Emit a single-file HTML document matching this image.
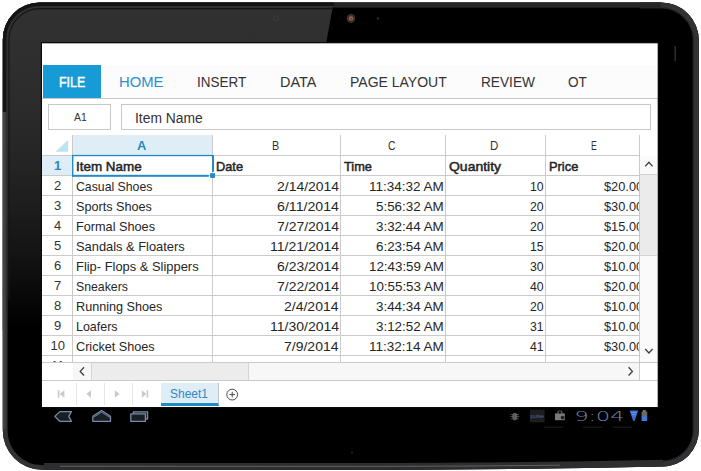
<!DOCTYPE html>
<html lang="en">
<head>
<meta charset="utf-8">
<title>Spreadsheet on tablet</title>
<style>
html,body{margin:0;padding:0;background:#fff;}
body{width:701px;height:471px;position:relative;overflow:hidden;font-family:"Liberation Sans",Arial,sans-serif;}
#dev{position:absolute;left:0;top:0;width:701px;height:471px;}
#scr{position:absolute;left:42px;top:43px;width:616px;height:364px;background:#fff;overflow:hidden;}
#app{position:absolute;left:-42px;top:-43px;width:701px;height:471px;}
.t{position:absolute;white-space:nowrap;line-height:20px;height:20px;transform-origin:0 0;}
#file{position:absolute;left:43px;top:65px;width:57.6px;height:33px;background:#179bd6;}
#rline{position:absolute;left:42px;top:98px;width:616px;height:1px;background:#c8c8c8;}
.box{position:absolute;border:1px solid #c8c8c8;background:#fff;box-sizing:border-box;}
#grid{position:absolute;left:42px;top:135px;width:598px;height:227px;overflow:hidden;}
#gin{position:absolute;left:-42px;top:-135px;width:701px;height:471px;}
.v{position:absolute;top:135px;width:1px;height:240px;background:#cbcbcb;}
.h{position:absolute;left:42px;width:598px;height:1px;background:#cbcbcb;}
#hA{position:absolute;left:73px;top:135px;width:140px;height:20px;background:#dfeef6;}
#h1{position:absolute;left:42px;top:156px;width:30px;height:19px;background:#dfeef6;}
</style>
</head>
<body>
<svg id="dev" viewBox="0 0 701 471" width="701" height="471">
<defs>
<linearGradient id="gl" gradientUnits="userSpaceOnUse" x1="0" y1="0" x2="0" y2="330">
<stop offset="0" stop-color="#313131"/><stop offset="0.15" stop-color="#2f2f2f"/><stop offset="0.33" stop-color="#2b2b2b"/><stop offset="0.48" stop-color="#252525"/><stop offset="0.64" stop-color="#1c1c1c"/><stop offset="0.79" stop-color="#121212"/><stop offset="0.91" stop-color="#070707"/><stop offset="1" stop-color="#000"/>
</linearGradient>
<clipPath id="body"><path d="M39.8,2.4 H661 A37.8,37.8 0 0 1 698.8,40.2 V430 A36.5,36.5 0 0 1 663,466.6 Q520,469.6 380,469.9 L42,469.8 A39.2,39.2 0 0 1 2.8,430.6 V39.4 A37,37 0 0 1 39.8,2.4 Z"/></clipPath>
</defs>
<path d="M39.8,2.4 H661 A37.8,37.8 0 0 1 698.8,40.2 V430 A36.5,36.5 0 0 1 663,466.6 Q520,469.6 380,469.9 L42,469.8 A39.2,39.2 0 0 1 2.8,430.6 V39.4 A37,37 0 0 1 39.8,2.4 Z" fill="#000"/>
<g clip-path="url(#body)">
<polygon points="0,0 334,0 326,44 43,44 43,330 0,330" fill="url(#gl)"/>
<path d="M640,2.4 H661 A37.8,37.8 0 0 1 698.8,40.2 V430 A36.5,36.5 0 0 1 663,466.6" fill="none" stroke="#262627" stroke-width="12"/>
<path d="M39.8,2.4 H661 A37.8,37.8 0 0 1 698.8,40.2 V430 A36.5,36.5 0 0 1 663,466.6 Q520,469.6 380,469.9 L42,469.8 A39.2,39.2 0 0 1 2.8,430.6 V39.4 A37,37 0 0 1 39.8,2.4 Z" fill="none" stroke="#323234" stroke-width="9.5"/>
<path d="M44,466.4 L380,466.5 Q520,466.2 663,463.2" fill="none" stroke="#2e2e30" stroke-width="7"/>
<path d="M60,466.3 L380,466.4 Q470,466.3 560,465.2" fill="none" stroke="#777" stroke-width="0.7"/>
<path d="M2.8,112 V39.4 A37,37 0 0 1 39.8,2.4 H334" fill="none" stroke="#141415" stroke-width="7"/>
<path d="M9,300 V39.4 A30.8,30.8 0 0 1 39.8,8.6 H332" fill="none" stroke="#161617" stroke-width="1.2"/>
<path d="M2.8,112 V429" fill="none" stroke="#444" stroke-width="5"/>
<path d="M334,2.4 H661" fill="none" stroke="#262628" stroke-width="10"/>
</g>
<rect x="40.8" y="42" width="618" height="366.4" fill="#0a0a0a"/>
<circle cx="351" cy="18.4" r="4.3" fill="#343436"/><circle cx="351" cy="18.4" r="2.2" fill="#a85c3c"/><circle cx="351.2" cy="18.6" r="0.9" fill="#6a3220"/>
<circle cx="378" cy="18.4" r="1.2" fill="#2c2c2c"/>
<circle cx="276" cy="18.4" r="3" fill="#38383a"/><circle cx="276" cy="18.4" r="1.6" fill="#303032"/>
<rect x="674.4" y="46" width="1.6" height="15" fill="#2c2c2e"/>
</svg>
<div id="scr"><div id="app">
<div style="position:absolute;left:42px;top:65px;width:616px;height:33px;background:#fcfcfc"></div>
<div id="file"></div>
<div id="rline"></div>
<div class="box" style="left:48px;top:104px;width:63px;height:26px;"></div>
<div class="box" style="left:121px;top:104px;width:530px;height:26px;"></div>
<div id="grid"><div id="gin">
<div id="hA"></div><div id="h1"></div>
<i class="v" style="left:72px"></i><i class="v" style="left:212px"></i><i class="v" style="left:340px"></i><i class="v" style="left:445px"></i><i class="v" style="left:545px"></i><i class="h" style="top:155px"></i><i class="h" style="top:175px"></i><i class="h" style="top:195px"></i><i class="h" style="top:215px"></i><i class="h" style="top:235px"></i><i class="h" style="top:255px"></i><i class="h" style="top:275px"></i><i class="h" style="top:295px"></i><i class="h" style="top:315px"></i><i class="h" style="top:335px"></i><i class="h" style="top:355px"></i><i class="h" style="top:375px"></i>
<span class="t " style="left:75.76px;top:157px;font-size:13px;color:#262626;-webkit-text-stroke:0.5px #262626;transform:scaleX(1.0334);">Item Name</span><span class="t " style="left:215.95px;top:157px;font-size:13px;color:#262626;-webkit-text-stroke:0.5px #262626;transform:scaleX(0.9843);">Date</span><span class="t " style="left:344.25px;top:157px;font-size:13px;color:#262626;-webkit-text-stroke:0.5px #262626;transform:scaleX(0.9814);">Time</span><span class="t " style="left:449.17px;top:157px;font-size:13px;color:#262626;-webkit-text-stroke:0.5px #262626;transform:scaleX(1.0748);">Quantity</span><span class="t " style="left:548.75px;top:157px;font-size:13px;color:#262626;-webkit-text-stroke:0.5px #262626;transform:scaleX(0.9892);">Price</span><span class="t " style="left:75.50px;top:177px;font-size:13px;color:#262626;transform:scaleX(0.9439);">Casual Shoes</span><span class="t " style="left:276.70px;top:177px;font-size:13px;color:#262626;transform:scaleX(1.0724);">2/14/2014</span><span class="t " style="left:369.00px;top:177px;font-size:13px;color:#262626;transform:scaleX(1.0394);">11:34:32 AM</span><span class="t " style="left:530.20px;top:177px;font-size:13px;color:#262626;transform:scaleX(0.9420);">10</span><span class="t " style="left:603.90px;top:177px;font-size:13px;color:#262626;transform:scaleX(0.9836);">$20.00</span><span class="t " style="left:75.50px;top:197px;font-size:13px;color:#262626;transform:scaleX(0.9723);">Sports Shoes</span><span class="t " style="left:276.70px;top:197px;font-size:13px;color:#262626;transform:scaleX(1.0901);">6/11/2014</span><span class="t " style="left:376.20px;top:197px;font-size:13px;color:#262626;transform:scaleX(1.0297);">5:56:32 AM</span><span class="t " style="left:530.20px;top:197px;font-size:13px;color:#262626;transform:scaleX(0.9420);">20</span><span class="t " style="left:603.90px;top:197px;font-size:13px;color:#262626;transform:scaleX(0.9836);">$30.00</span><span class="t " style="left:75.50px;top:217px;font-size:13px;color:#262626;transform:scaleX(0.9761);">Formal Shoes</span><span class="t " style="left:276.70px;top:217px;font-size:13px;color:#262626;transform:scaleX(1.0724);">7/27/2014</span><span class="t " style="left:376.20px;top:217px;font-size:13px;color:#262626;transform:scaleX(1.0297);">3:32:44 AM</span><span class="t " style="left:530.20px;top:217px;font-size:13px;color:#262626;transform:scaleX(0.9420);">20</span><span class="t " style="left:603.90px;top:217px;font-size:13px;color:#262626;transform:scaleX(0.9836);">$15.00</span><span class="t " style="left:75.50px;top:237px;font-size:13px;color:#262626;transform:scaleX(0.9899);">Sandals &amp; Floaters</span><span class="t " style="left:269.50px;top:237px;font-size:13px;color:#262626;transform:scaleX(1.0791);">11/21/2014</span><span class="t " style="left:376.20px;top:237px;font-size:13px;color:#262626;transform:scaleX(1.0297);">6:23:54 AM</span><span class="t " style="left:530.20px;top:237px;font-size:13px;color:#262626;transform:scaleX(0.9420);">15</span><span class="t " style="left:603.90px;top:237px;font-size:13px;color:#262626;transform:scaleX(0.9836);">$20.00</span><span class="t " style="left:75.50px;top:257px;font-size:13px;color:#262626;transform:scaleX(0.9922);">Flip- Flops &amp; Slippers</span><span class="t " style="left:276.70px;top:257px;font-size:13px;color:#262626;transform:scaleX(1.0724);">6/23/2014</span><span class="t " style="left:369.00px;top:257px;font-size:13px;color:#262626;transform:scaleX(1.0260);">12:43:59 AM</span><span class="t " style="left:530.20px;top:257px;font-size:13px;color:#262626;transform:scaleX(0.9420);">30</span><span class="t " style="left:603.90px;top:257px;font-size:13px;color:#262626;transform:scaleX(0.9836);">$10.00</span><span class="t " style="left:75.50px;top:277px;font-size:13px;color:#262626;transform:scaleX(0.9447);">Sneakers</span><span class="t " style="left:276.70px;top:277px;font-size:13px;color:#262626;transform:scaleX(1.0724);">7/22/2014</span><span class="t " style="left:369.00px;top:277px;font-size:13px;color:#262626;transform:scaleX(1.0260);">10:55:53 AM</span><span class="t " style="left:530.20px;top:277px;font-size:13px;color:#262626;transform:scaleX(0.9420);">40</span><span class="t " style="left:603.90px;top:277px;font-size:13px;color:#262626;transform:scaleX(0.9836);">$20.00</span><span class="t " style="left:75.50px;top:297px;font-size:13px;color:#262626;transform:scaleX(0.9722);">Running Shoes</span><span class="t " style="left:284.20px;top:297px;font-size:13px;color:#262626;transform:scaleX(1.0765);">2/4/2014</span><span class="t " style="left:376.20px;top:297px;font-size:13px;color:#262626;transform:scaleX(1.0297);">3:44:34 AM</span><span class="t " style="left:530.20px;top:297px;font-size:13px;color:#262626;transform:scaleX(0.9420);">20</span><span class="t " style="left:603.90px;top:297px;font-size:13px;color:#262626;transform:scaleX(0.9836);">$10.00</span><span class="t " style="left:75.50px;top:317px;font-size:13px;color:#262626;transform:scaleX(0.9591);">Loafers</span><span class="t " style="left:269.50px;top:317px;font-size:13px;color:#262626;transform:scaleX(1.0791);">11/30/2014</span><span class="t " style="left:376.20px;top:317px;font-size:13px;color:#262626;transform:scaleX(1.0297);">3:12:52 AM</span><span class="t " style="left:530.20px;top:317px;font-size:13px;color:#262626;transform:scaleX(0.9420);">31</span><span class="t " style="left:603.90px;top:317px;font-size:13px;color:#262626;transform:scaleX(0.9836);">$10.00</span><span class="t " style="left:75.50px;top:337px;font-size:13px;color:#262626;transform:scaleX(0.9724);">Cricket Shoes</span><span class="t " style="left:284.20px;top:337px;font-size:13px;color:#262626;transform:scaleX(1.0765);">7/9/2014</span><span class="t " style="left:369.00px;top:337px;font-size:13px;color:#262626;transform:scaleX(1.0394);">11:32:14 AM</span><span class="t " style="left:530.20px;top:337px;font-size:13px;color:#262626;transform:scaleX(0.9420);">41</span><span class="t " style="left:603.90px;top:337px;font-size:13px;color:#262626;transform:scaleX(0.9836);">$30.00</span><span class="t " style="left:75.50px;top:357px;font-size:13px;color:#262626;transform:scaleX(1.0377);">T-Shirts</span><span class="t " style="left:276.70px;top:357px;font-size:13px;color:#262626;transform:scaleX(1.0724);">6/30/2014</span><span class="t " style="left:376.20px;top:357px;font-size:13px;color:#262626;transform:scaleX(1.0297);">4:15:20 AM</span><span class="t " style="left:530.20px;top:357px;font-size:13px;color:#262626;transform:scaleX(0.9420);">50</span><span class="t " style="left:603.90px;top:357px;font-size:13px;color:#262626;transform:scaleX(0.9836);">$15.00</span>
<span class="t " style="left:54.08px;top:156px;font-size:13px;color:#2588c6;font-weight:bold;transform:scaleX(1.0000);">1</span><span class="t " style="left:54.08px;top:176px;font-size:13px;color:#333;transform:scaleX(1.0000);">2</span><span class="t " style="left:54.08px;top:196px;font-size:13px;color:#333;transform:scaleX(1.0000);">3</span><span class="t " style="left:54.08px;top:216px;font-size:13px;color:#333;transform:scaleX(1.0000);">4</span><span class="t " style="left:54.08px;top:236px;font-size:13px;color:#333;transform:scaleX(1.0000);">5</span><span class="t " style="left:54.08px;top:256px;font-size:13px;color:#333;transform:scaleX(1.0000);">6</span><span class="t " style="left:54.08px;top:276px;font-size:13px;color:#333;transform:scaleX(1.0000);">7</span><span class="t " style="left:54.08px;top:296px;font-size:13px;color:#333;transform:scaleX(1.0000);">8</span><span class="t " style="left:54.08px;top:316px;font-size:13px;color:#333;transform:scaleX(1.0000);">9</span><span class="t " style="left:50.48px;top:336px;font-size:13px;color:#333;transform:scaleX(1.0000);">10</span><span class="t " style="left:50.95px;top:356px;font-size:13px;color:#333;transform:scaleX(1.0000);">11</span>
<span class="t " style="left:136.55px;top:136px;font-size:13px;color:#2588c6;font-weight:bold;transform:scaleX(0.9920);">A</span><span class="t " style="left:271.80px;top:136px;font-size:13px;color:#333;transform:scaleX(0.8288);">B</span><span class="t " style="left:387.85px;top:136px;font-size:13px;color:#333;transform:scaleX(0.8000);">C</span><span class="t " style="left:490.15px;top:136px;font-size:13px;color:#333;transform:scaleX(0.8853);">D</span><span class="t " style="left:591.30px;top:136px;font-size:13px;color:#333;transform:scaleX(0.6676);">E</span>
<svg style="position:absolute;left:50px;top:135px" width="170" height="46" viewBox="50 135 170 46">
<path d="M68.2,139.8 V151.8 H55.4 Z" fill="#bfe2f2"/>
<g fill="#2389c7">
<rect x="72" y="154.9" width="142" height="1.3"/>
<rect x="72" y="155" width="1.4" height="21.8"/>
<rect x="212" y="155" width="2" height="16.8"/>
<rect x="72" y="174.8" width="136.8" height="2"/>
<rect x="210.1" y="173.2" width="4.9" height="4.7"/>
</g>
</svg>
</div></div>
<div style="position:absolute;left:639px;top:135px;width:1px;height:246px;background:#cbcbcb"></div><div style="position:absolute;left:640px;top:156px;width:17px;height:206px;background:#fafafa"></div><div style="position:absolute;left:640px;top:174px;width:17px;height:1px;background:#d2d2d2"></div><div style="position:absolute;left:640px;top:175px;width:17px;height:80px;background:#ebebeb"></div><div style="position:absolute;left:640px;top:255px;width:17px;height:1px;background:#d4d4d4"></div><svg style="position:absolute;left:640px;top:155px" width="18" height="20" viewBox="0 0 18 20"><path d="M5.2,11.4 L8.9,7.3 L12.6,11.4" fill="none" stroke="#404040" stroke-width="1.35"/></svg><svg style="position:absolute;left:640px;top:341px" width="18" height="20" viewBox="0 0 18 20"><path d="M5.2,8 L8.9,12 L12.6,8" fill="none" stroke="#404040" stroke-width="1.35"/></svg><div style="position:absolute;left:42px;top:362px;width:616px;height:1px;background:#cbcbcb"></div><div style="position:absolute;left:42px;top:380px;width:616px;height:1px;background:#cbcbcb"></div><div style="position:absolute;left:73px;top:363px;width:566px;height:17px;background:#f7f7f7"></div><div style="position:absolute;left:91px;top:363px;width:1px;height:17px;background:#d4d4d4"></div><div style="position:absolute;left:92px;top:363px;width:156px;height:17px;background:#ececec"></div><div style="position:absolute;left:248px;top:363px;width:1px;height:17px;background:#d4d4d4"></div><svg style="position:absolute;left:73px;top:363px" width="18" height="17" viewBox="0 0 18 17"><path d="M11,4.3 L7.2,8.4 L11,12.5" fill="none" stroke="#404040" stroke-width="1.35"/></svg><svg style="position:absolute;left:621px;top:363px" width="18" height="17" viewBox="0 0 18 17"><path d="M7.6,4.3 L11.4,8.4 L7.6,12.5" fill="none" stroke="#404040" stroke-width="1.35"/></svg><div style="position:absolute;left:76px;top:383px;width:1px;height:22px;background:#e6e6e6"></div><div style="position:absolute;left:104px;top:383px;width:1px;height:22px;background:#e6e6e6"></div><div style="position:absolute;left:132px;top:383px;width:1px;height:22px;background:#e6e6e6"></div><svg style="position:absolute;left:42px;top:381px" width="120" height="27" viewBox="42 381 120 27" fill="#c9c9c9"><rect x="57.8" y="390.3" width="1.6" height="7.4"/><path d="M64.4,390.3 V397.7 L59.6,394 Z"/><path d="M91,390.3 V397.7 L86.4,394 Z"/><path d="M114.8,390.3 V397.7 L119.6,394 Z"/><path d="M141.8,390.3 V397.7 L146.4,394 Z"/><rect x="146.6" y="390.3" width="1.6" height="7.4"/></svg><div style="position:absolute;left:161px;top:383px;width:58px;height:23px;background:#deedf6;border-right:1px solid #c4c4c4;border-bottom:3px solid #1f8bc4;box-sizing:border-box"></div><svg style="position:absolute;left:224px;top:386px" width="17" height="17" viewBox="0 0 17 17"><circle cx="8.2" cy="8.6" r="5.4" fill="none" stroke="#4a4a4a" stroke-width="1"/><path d="M5.4,8.6 H11 M8.2,5.8 V11.4" stroke="#4a4a4a" stroke-width="1" fill="none"/></svg>
<span class="t " style="left:59.19px;top:72px;font-size:15px;color:#fff;-webkit-text-stroke:0.45px #fff;transform:scaleX(0.8308);">FILE</span><span class="t " style="left:119.10px;top:72px;font-size:15px;color:#2b8fd0;transform:scaleX(0.9889);">HOME</span><span class="t " style="left:196.60px;top:72px;font-size:15px;color:#333;transform:scaleX(0.8986);">INSERT</span><span class="t " style="left:279.60px;top:72px;font-size:15px;color:#333;transform:scaleX(0.9642);">DATA</span><span class="t " style="left:349.70px;top:72px;font-size:15px;color:#333;transform:scaleX(0.9332);">PAGE LAYOUT</span><span class="t " style="left:480.60px;top:72px;font-size:15px;color:#333;transform:scaleX(0.9107);">REVIEW</span><span class="t " style="left:567.90px;top:72px;font-size:15px;color:#333;transform:scaleX(0.9033);">OT</span><span class="t " style="left:73.70px;top:107px;font-size:11px;color:#333;transform:scaleX(0.9451);">A1</span><span class="t " style="left:135.00px;top:108px;font-size:14px;color:#333;transform:scaleX(0.9907);">Item Name</span><span class="t " style="left:170.40px;top:384px;font-size:13.2px;color:#3289c6;transform:scaleX(0.9080);">Sheet1</span>
<div style="position:absolute;left:657px;top:43px;width:1px;height:364px;background:rgba(0,0,0,0.3)"></div>
<div style="position:absolute;left:42px;top:43px;width:616px;height:1px;background:rgba(0,0,0,0.3)"></div>
</div></div>

<svg id="nav" viewBox="0 407 701 64" width="701" height="64" style="position:absolute;left:0;top:407px">
<g fill="#181d26" stroke="#7b89a6" stroke-width="1.3" stroke-linejoin="round">
<path d="M54.8,416.4 L59.8,411.6 H71.4 L68.8,416.4 L71.4,421.3 H59.8 Z"/>
<path d="M92.8,416.2 L101.6,410.5 L110.5,416.2 V421.3 H92.8 Z"/><path d="M93.4,417.4 L101.6,412.2 L109.9,417.4" fill="none" stroke-width="0.9"/>
<path d="M133.4,413.6 V411.8 H147.6 V419 H145.6"/>
<rect x="130.8" y="413.8" width="14.6" height="7.5"/>
</g>
<g fill="#5e5e5e">
<ellipse cx="514.8" cy="416.6" rx="2.6" ry="3.8"/>
<path d="M510.6,414.2 h8.4 v0.8 h-8.4z M510.2,416.3 h9.2 v0.8 h-9.2z M510.6,418.4 h8.4 v0.8 h-8.4z"/>
</g>
<rect x="530" y="409.6" width="14.6" height="12.8" fill="#1d1d1f"/>
<text x="537.3" y="417.6" font-family="Liberation Sans, Arial, sans-serif" font-size="5.6" fill="#50689c" text-anchor="middle">pulse</text>
<g fill="#7a7a7a">
<path d="M555,413.4 H564.8 V420.2 H555 Z"/>
<path d="M557.4,413.6 V412 Q557.4,410.4 559.9,410.4 Q562.4,410.4 562.4,412 V413.6 H561.4 V412.2 Q561.4,411.3 559.9,411.3 Q558.4,411.3 558.4,412.2 V413.6 Z"/>
</g>
<circle cx="562.6" cy="417.6" r="1.9" fill="#222"/>
<text id="clk" x="574.4" y="421" font-family="DejaVu Sans, Liberation Sans, sans-serif" font-weight="200" font-size="13.2" fill="#7285b6" textLength="50" lengthAdjust="spacingAndGlyphs">9:04</text>
<path d="M629.6,410.6 H638.2 L634.6,421 H633.2 Z" fill="#3b6fd6"/>
<path d="M631,412.4 H636.8 M632,414.6 H635.8" stroke="#7fa4ee" stroke-width="0.7"/>
<rect x="642.8" y="410" width="3" height="2" fill="#777"/>
<rect x="641.6" y="411.6" width="5.6" height="5.4" fill="#6a6a6a"/>
<rect x="641.6" y="416.6" width="5.6" height="4.4" fill="#3f78e0"/>
<g stroke="#1f1f22" stroke-width="1"><path d="M544,427.2 H563 M583,427.2 H602 M613,427.2 H632"/></g>
<circle cx="352" cy="452.5" r="0.9" fill="#2a2a2a"/>
</svg>

</body>
</html>
